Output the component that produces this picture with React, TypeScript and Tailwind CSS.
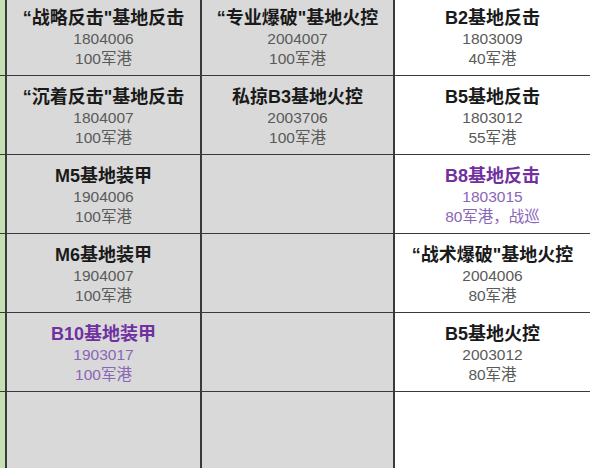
import React from 'react';

type Cell = {
  title: string;
  code: string;
  port: string;
  purple?: boolean;
} | null;

const rows: Cell[][] = [
  [
    { title: '“战略反击"基地反击', code: '1804006', port: '100军港' },
    { title: '“专业爆破"基地火控', code: '2004007', port: '100军港' },
    { title: 'B2基地反击', code: '1803009', port: '40军港' },
  ],
  [
    { title: '“沉着反击"基地反击', code: '1804007', port: '100军港' },
    { title: '私掠B3基地火控', code: '2003706', port: '100军港' },
    { title: 'B5基地反击', code: '1803012', port: '55军港' },
  ],
  [
    { title: 'M5基地装甲', code: '1904006', port: '100军港' },
    null,
    { title: 'B8基地反击', code: '1803015', port: '80军港，战巡', purple: true },
  ],
  [
    { title: 'M6基地装甲', code: '1904007', port: '100军港' },
    null,
    { title: '“战术爆破"基地火控', code: '2004006', port: '80军港' },
  ],
  [
    { title: 'B10基地装甲', code: '1903017', port: '100军港', purple: true },
    null,
    { title: 'B5基地火控', code: '2003012', port: '80军港' },
  ],
  [null, null, null],
];

const CellBox: React.FC<{ cell: Cell; white?: boolean }> = ({ cell, white }) => (
  <div
    className={`h-[78px] pt-[3px] flex flex-col items-center justify-center ${
      white ? 'bg-white' : 'bg-[#d9d9d9]'
    }`}
  >
    {cell && (
      <>
        <div
          className={`text-[18px] font-bold leading-[22px] ${
            cell.purple ? 'text-[#7030a0]' : 'text-[#1a1a1a]'
          }`}
        >
          {cell.title}
        </div>
        <div
          className={`text-[15.5px] leading-[20px] ${
            cell.purple ? 'text-[#8a66b8]' : 'text-[#5a5a5a]'
          }`}
        >
          {cell.code}
        </div>
        <div
          className={`text-[15.5px] leading-[20px] ${
            cell.purple ? 'text-[#8a66b8]' : 'text-[#5a5a5a]'
          }`}
        >
          {cell.port}
        </div>
      </>
    )}
  </div>
);

export default function App() {
  return (
    <div
      className="w-[590px] h-[468px] overflow-hidden bg-white"
      style={{ fontFamily: '"Liberation Sans", "Noto Sans CJK SC", sans-serif' }}
    >
      <div className="-mt-[3px] grid grid-cols-[5px_193px_191px_1fr] gap-x-[2px] gap-y-px bg-[#3a3a3a]">
        {rows.map((row, i) => (
          <React.Fragment key={i}>
            <div className="bg-[#c5e0b3]" />
            <CellBox cell={row[0]} />
            <CellBox cell={row[1]} />
            <CellBox cell={row[2]} white />
          </React.Fragment>
        ))}
      </div>
    </div>
  );
}
